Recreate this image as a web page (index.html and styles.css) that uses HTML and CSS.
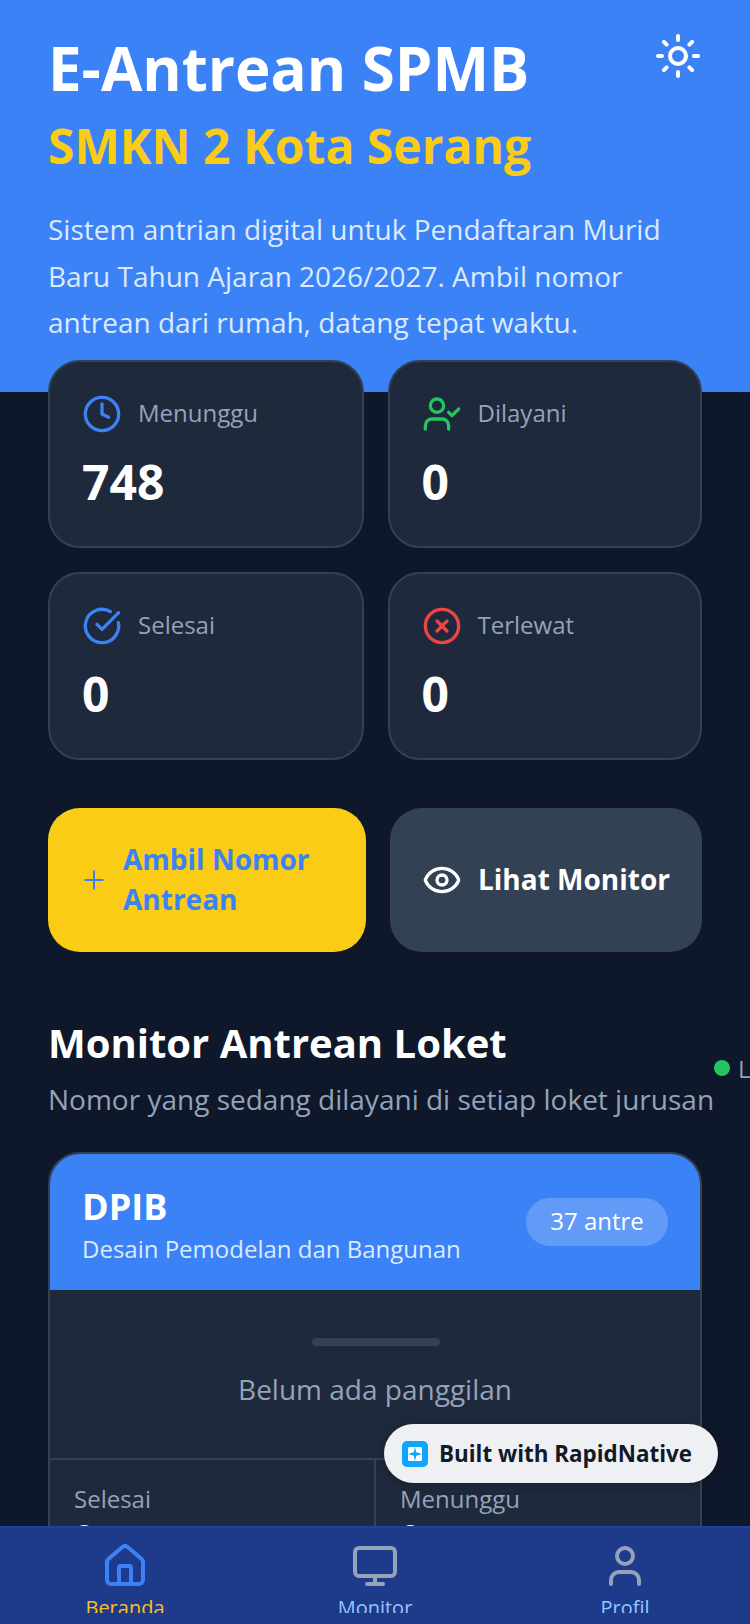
FILE: index.html
```html
<!DOCTYPE html>
<html lang="id">
<head>
<meta charset="utf-8">
<title>E-Antrean SPMB</title>
<link rel="stylesheet" href="styles.css">
</head>
<body>
<div class="app">
  <main class="main">
    <header class="hero">
      <div class="hero-top">
        <h1 class="title">E-Antrean SPMB</h1>
        <svg class="icon sun" viewBox="0 0 24 24"><circle cx="12" cy="12" r="4"/><path d="M12 2v2M12 20v2M4.93 4.93l1.41 1.41M17.66 17.66l1.41 1.41M2 12h2M20 12h2M6.34 17.66l-1.41 1.41M19.07 4.93l-1.41 1.41"/></svg>
      </div>
      <h2 class="school">SMKN 2 Kota Serang</h2>
      <p class="desc">Sistem antrian digital untuk Pendaftaran Murid Baru Tahun Ajaran 2026/2027. Ambil nomor antrean dari rumah, datang tepat waktu.</p>
    </header>

    <section class="stats">
      <div class="stat">
        <div class="stat-head"><svg class="icon stat-icon blue" viewBox="0 0 24 24"><circle cx="12" cy="12" r="10"/><path d="M12 6v6l4 2"/></svg><span class="stat-label">Menunggu</span></div>
        <div class="stat-value">748</div>
      </div>
      <div class="stat">
        <div class="stat-head"><svg class="icon stat-icon green" viewBox="0 0 24 24"><path d="M16 21v-2a4 4 0 0 0-4-4H6a4 4 0 0 0-4 4v2"/><circle cx="9" cy="7" r="4"/><path d="M16 11l2 2 4-4"/></svg><span class="stat-label">Dilayani</span></div>
        <div class="stat-value">0</div>
      </div>
      <div class="stat">
        <div class="stat-head"><svg class="icon stat-icon blue" viewBox="0 0 24 24"><path d="M21.801 10A10 10 0 1 1 17 3.335"/><path d="M9 11l3 3L22 4"/></svg><span class="stat-label">Selesai</span></div>
        <div class="stat-value">0</div>
      </div>
      <div class="stat">
        <div class="stat-head"><svg class="icon stat-icon red" viewBox="0 0 24 24"><circle cx="12" cy="12" r="10"/><path d="M15 9l-6 6M9 9l6 6"/></svg><span class="stat-label">Terlewat</span></div>
        <div class="stat-value">0</div>
      </div>
    </section>

    <section class="actions">
      <div class="btn btn-primary">
        <svg class="icon plus" viewBox="0 0 24 24"><path d="M5 12h14M12 5v14"/></svg>
        <span class="btn-text">Ambil Nomor Antrean</span>
      </div>
      <div class="btn btn-dark">
        <svg class="icon eye" viewBox="0 0 24 24"><path d="M2.062 12.348a1 1 0 0 1 0-.696 10.75 10.75 0 0 1 19.876 0 1 1 0 0 1 0 .696 10.75 10.75 0 0 1-19.876 0"/><circle cx="12" cy="12" r="3"/></svg>
        <span class="btn-text">Lihat Monitor</span>
      </div>
    </section>

    <section class="monitor">
      <div class="monitor-head">
        <div class="monitor-titles">
          <h2 class="monitor-title">Monitor Antrean Loket</h2>
          <p class="monitor-sub">Nomor yang sedang dilayani di setiap loket jurusan</p>
        </div>
        <div class="live"><span class="live-dot"></span><span class="live-text">Live</span></div>
      </div>

      <article class="loket">
        <div class="loket-head">
          <div class="loket-info">
            <div class="loket-code">DPIB</div>
            <div class="loket-name">Desain Pemodelan dan Bangunan</div>
          </div>
          <span class="loket-badge">37 antre</span>
        </div>
        <div class="loket-body">
          <div class="loket-bar"></div>
          <div class="loket-empty">Belum ada panggilan</div>
        </div>
        <div class="loket-foot">
          <div class="foot-cell"><div class="foot-label">Selesai</div><div class="foot-value">0</div></div>
          <div class="foot-cell foot-right"><div class="foot-label">Menunggu</div><div class="foot-value">0</div></div>
        </div>
      </article>
    </section>
  </main>

  <nav class="nav">
    <div class="nav-item active">
      <svg class="icon nav-icon" viewBox="0 0 24 24"><path d="M15 21v-8a1 1 0 0 0-1-1h-4a1 1 0 0 0-1 1v8"/><path d="M3 10a2 2 0 0 1 .709-1.528l7-5.999a2 2 0 0 1 2.582 0l7 5.999A2 2 0 0 1 21 10v9a2 2 0 0 1-2 2H5a2 2 0 0 1-2-2z"/></svg>
      <span class="nav-label">Beranda</span>
    </div>
    <div class="nav-item">
      <svg class="icon nav-icon" viewBox="0 0 24 24"><rect x="2" y="3" width="20" height="14" rx="2"/><path d="M8 21h8M12 17v4"/></svg>
      <span class="nav-label">Monitor</span>
    </div>
    <div class="nav-item">
      <svg class="icon nav-icon" viewBox="0 0 24 24"><path d="M19 21v-2a4 4 0 0 0-4-4H9a4 4 0 0 0-4 4v2"/><circle cx="12" cy="7" r="4"/></svg>
      <span class="nav-label">Profil</span>
    </div>
  </nav>

  <div class="built">
    <svg class="built-logo" viewBox="0 0 26 26"><rect width="26" height="26" rx="5" fill="#0ea5ff"/><rect x="6" y="6" width="14" height="14" rx="1.5" fill="#fff"/><path fill="#0ea5ff" d="M13 6l1.3 5.2L20 13l-5.7 1.8L13 20l-1.3-5.2L6 13l5.7-1.8z"/></svg>
    <span class="built-text">Built with RapidNative</span>
  </div>
</div>
</body>
</html>
```
FILE: styles.css
```css
* { box-sizing: border-box; margin: 0; padding: 0; }
html, body { width: 750px; height: 1624px; overflow: hidden; background: #0f172a; }
body { font-family: "Open Sans", "Noto Sans", sans-serif; color: #fff; }

.app { position: relative; width: 750px; height: 1624px; display: flex; flex-direction: column; overflow: hidden; }
.main { flex: 1; min-height: 0; overflow: hidden; }

.icon { fill: none; stroke: currentColor; stroke-width: 2; stroke-linecap: round; stroke-linejoin: round; flex: none; display: block; }

.hero { height: 392px; background: #3b82f6; padding: 26px 48px 0; }
.hero-top { display: flex; justify-content: space-between; align-items: flex-start; }
.title { font-size: 60px; line-height: 84px; font-weight: 700; color: #fff; }
.sun { width: 48px; height: 48px; margin: 6px 0 0 0; color: #fff; }
.school { font-size: 48px; line-height: 60px; font-weight: 700; color: #facc15; margin-top: 6px; }
.desc { font-size: 28px; line-height: 46.5px; color: #dbeafe; margin-top: 30px; }

.stats { display: grid; grid-template-columns: 315.5px 314.5px; column-gap: 24px; row-gap: 24px; padding: 0 48px; margin-top: -32px; }
.stat { height: 188px; background: #1e293b; border: 2px solid #334155; border-radius: 32px; padding: 32px; }
.stat-head { display: flex; align-items: center; gap: 16px; height: 40px; }
.stat-icon { width: 40px; height: 40px; }
.blue { color: #3b82f6; }
.green { color: #22c55e; }
.red { color: #ef4444; }
.stat-label { font-size: 24px; color: #94a3b8; margin-bottom: 4px; }
.stat-value { font-size: 48px; line-height: 64px; font-weight: 700; color: #fff; margin-top: 16px; }

.actions { display: grid; grid-template-columns: 318px 312px; column-gap: 24px; padding: 0 48px; margin-top: 48px; }
.btn { height: 144px; border-radius: 32px; display: flex; align-items: center; gap: 14px; font-size: 28px; line-height: 40px; font-weight: 700; }
.btn-text { margin-top: -2px; }
.btn-primary { background: #facc15; color: #3b82f6; padding: 0 31px; }
.btn-dark { background: #334155; color: #fff; justify-content: center; gap: 16px; }
.plus { width: 30px; height: 30px; stroke-width: 1.6; }
.eye { width: 40px; height: 40px; }

.monitor { padding: 0 48px; margin-top: 63px; }
.monitor-head { display: flex; align-items: center; width: 654px; gap: 0; }
.monitor-titles { flex: none; }
.monitor-title { font-size: 40px; line-height: 56px; font-weight: 700; color: #fff; }
.monitor-sub { font-size: 28px; line-height: 42px; color: #94a3b8; white-space: nowrap; margin-top: 7px; }
.live { flex: none; display: flex; align-items: center; gap: 8px; margin-top: 1px; }
.live-dot { width: 16px; height: 16px; border-radius: 50%; background: #22c55e; }
.live-text { font-size: 24px; color: #94a3b8; }

.loket { width: 654px; margin-top: 32px; background: #1e293b; border: 2px solid #334155; border-radius: 32px; overflow: hidden; }
.loket-head { height: 136px; background: #3b82f6; padding: 0 32px; display: flex; align-items: center; justify-content: space-between; }
.loket-info { padding-top: 4px; }
.loket-code { font-size: 36px; line-height: 50px; font-weight: 700; color: #fff; }
.loket-name { font-size: 24px; line-height: 34px; color: #dbeafe; }
.loket-badge { width: 142px; height: 48px; border-radius: 24px; background: rgba(255,255,255,.2); font-size: 24px; line-height: 46px; text-align: center; color: #fff; }
.loket-body { height: 168px; display: flex; flex-direction: column; align-items: center; padding-top: 48px; }
.loket-bar { width: 128px; height: 8px; border-radius: 4px; background: #334155; margin-left: 2px; }
.loket-empty { font-size: 28px; line-height: 40px; color: #94a3b8; margin-top: 23px; }
.loket-foot { display: grid; grid-template-columns: 324px 1fr; border-top: 2px solid #334155; }
.foot-cell { padding: 22px 24px; height: 160px; }
.foot-right { border-left: 2px solid #334155; }
.foot-label { font-size: 24px; line-height: 34px; color: #94a3b8; }
.foot-value { font-size: 36px; line-height: 44px; font-weight: 700; color: #fff; }

.nav { flex: none; height: 98px; background: #1e3a8a; border-top: 2px solid #1e40af; display: grid; grid-template-columns: repeat(3, 1fr); padding-top: 14px; overflow: hidden; position: relative; }
.nav-item { display: flex; flex-direction: column; align-items: center; height: 71px; overflow: hidden; color: #93c5fd; }
.nav-icon { width: 48px; height: 48px; color: #94a3b8; }
.nav-label { font-size: 20px; line-height: 28px; margin-top: 4px; }
.active .nav-icon { color: #3b82f6; }
.active .nav-label { color: #fbbf24; }

.built { position: absolute; left: 384px; top: 1424px; width: 334px; height: 59px; border-radius: 30px; background: #eef0f3; box-shadow: 0 2px 8px rgba(0,0,0,.25); display: flex; align-items: center; gap: 11px; padding-left: 18px; }
.built-logo { width: 26px; height: 26px; flex: none; }
.built-text { font-size: 22.4px; line-height: 30px; font-weight: 700; color: #111827; white-space: nowrap; }
```
